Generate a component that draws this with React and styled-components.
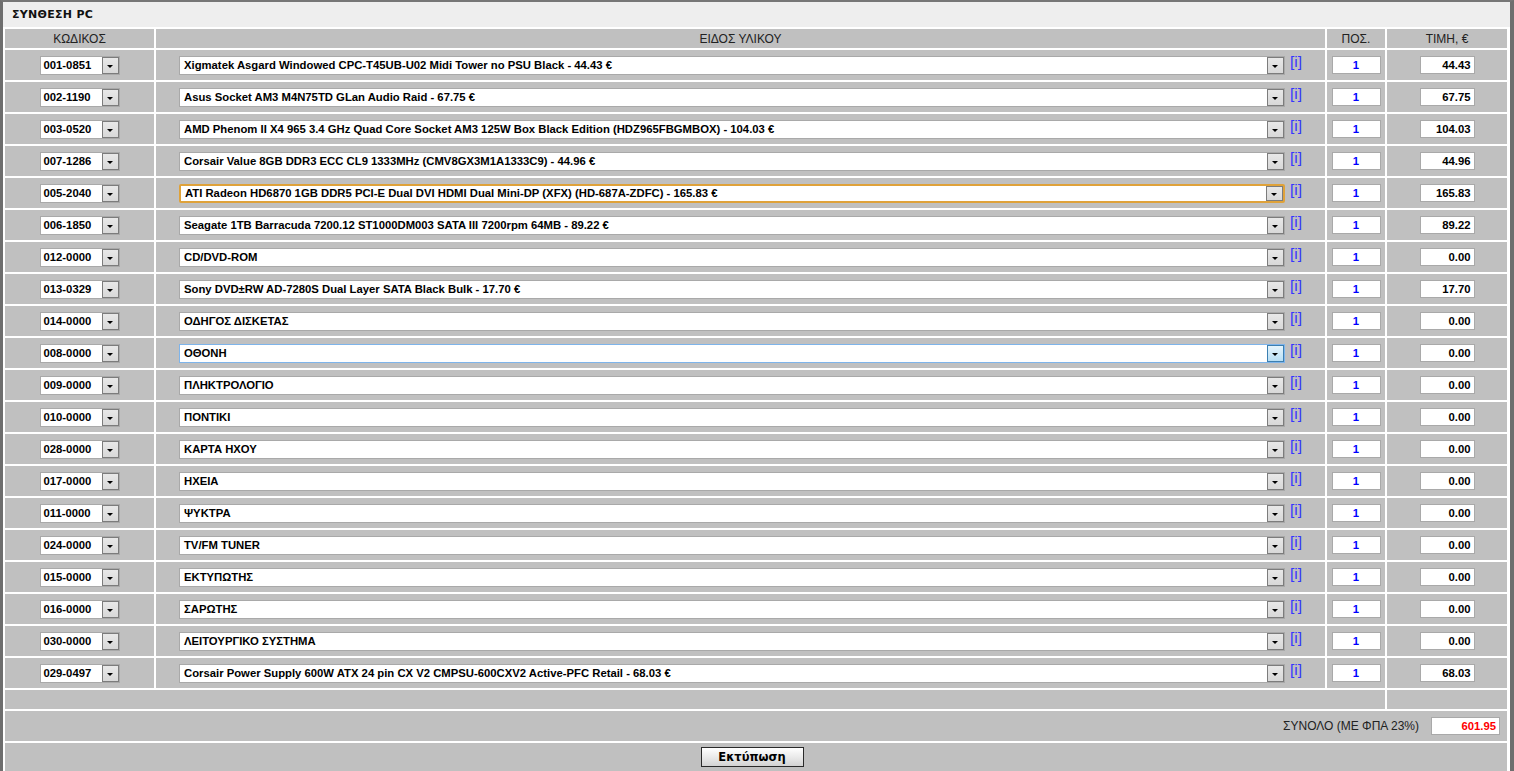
import React from "react";
import styled, { createGlobalStyle, css } from "styled-components";

const Global = createGlobalStyle`
  html, body { margin: 0; padding: 0; background: #ffffff; }
  body { font-family: "Liberation Sans", Arial, sans-serif; }
`;

const Frame = styled.div`
  width: 1514px;
  box-sizing: border-box;
  border-top: 2px solid #767676;
  border-left: 3px solid #6e6e6e;
  border-right: 4px solid #6e6e6e;
  background: #ffffff;
`;

const TitleBar = styled.div`
  height: 25px;
  background: #eeeeee;
  display: flex;
  align-items: center;
  padding-left: 9px;
  font-family: "DejaVu Sans", Verdana, sans-serif;
  font-weight: bold;
  font-size: 11px;
  letter-spacing: 0.3px;
  color: #111;
`;

const Table = styled.div`
  display: grid;
  grid-template-columns: 149px 1169px 58px 120px;
  gap: 2px;
  padding: 2px;
  background: #ffffff;
`;

const Cell = styled.div`
  background: #c0c0c0;
  height: ${(p) => p.$h || 30}px;
  display: flex;
  align-items: center;
  justify-content: ${(p) => p.$justify || "center"};
  grid-column: ${(p) => (p.$span ? `span ${p.$span}` : "auto")};
  box-sizing: border-box;
  padding-right: ${(p) => p.$pr || 0}px;
`;

const HeadText = styled.span`
  font-size: 12px;
  color: #222;
`;

const Select = styled.div`
  display: flex;
  align-items: center;
  box-sizing: border-box;
  width: ${(p) => p.$w}px;
  height: 19px;
  background: #fff;
  border: 1px solid #a9a9a9;
  ${(p) =>
    p.$focus &&
    css`
      border: 2px solid #dfa23a;
      border-radius: 2px;
    `}
  ${(p) =>
    p.$hover &&
    css`
      border-color: #7eb4ea;
    `}
`;

const Value = styled.span`
  flex: 1;
  padding-left: ${(p) => p.$pl || 4}px;
  font-size: 11.3px;
  font-weight: bold;
  color: #000;
  white-space: nowrap;
  overflow: hidden;
`;

const Arrow = styled.span`
  width: 17px;
  height: 17px;
  box-sizing: border-box;
  border: 1px solid #7c7c7c;
  background: linear-gradient(#e8e8e8, #d8d8d8);
  display: flex;
  align-items: center;
  justify-content: center;
  flex-shrink: 0;
  ${(p) =>
    p.$hover &&
    css`
      border-color: #3c7fb1;
      background: linear-gradient(#e5f4fc, #b8dff5);
    `}
  ${(p) =>
    p.$focus &&
    css`
      height: 15px;
    `}
  &::after {
    content: "";
    width: 0;
    height: 0;
    border-left: 3px solid transparent;
    border-right: 3px solid transparent;
    border-top: 3px solid #000;
    margin-top: 2px;
  }
`;

const DescWrap = styled.div`
  display: flex;
  align-items: center;
  gap: 5px;
`;

const Info = styled.a`
  font-size: 15.5px;
  color: #3535ff;
  text-decoration: none;
  margin-bottom: 7px;
  line-height: 15px;
`;

const Input = styled.div`
  box-sizing: border-box;
  width: ${(p) => p.$w}px;
  height: 18px;
  background: #fff;
  border: 1px solid #a9a9a9;
  display: flex;
  align-items: center;
  justify-content: ${(p) => (p.$align === "right" ? "flex-end" : "center")};
  padding-right: ${(p) => (p.$align === "right" ? 3 : 0)}px;
  font-size: 11.3px;
  font-weight: bold;
  color: ${(p) => p.$color || "#000"};
`;

const TotalLabel = styled.span`
  font-size: 12px;
  color: #222;
  margin-right: 12px;
`;

const PrintButton = styled.button`
  width: 103px;
  height: 20px;
  border: 1px solid #2a2a2a;
  background: linear-gradient(#ffffff, #e6e6e6 60%, #d2d2d2);
  font-family: "DejaVu Sans", Verdana, sans-serif;
  font-weight: bold;
  font-size: 11.5px;
  color: #000;
  padding: 0;
  margin-left: -8px;
  margin-bottom: 2px;
`;

const rows = [
  ["001-0851", "Xigmatek Asgard Windowed CPC-T45UB-U02 Midi Tower no PSU Black - 44.43 €", "44.43"],
  ["002-1190", "Asus Socket AM3 M4N75TD GLan Audio Raid - 67.75 €", "67.75"],
  ["003-0520", "AMD Phenom II X4 965 3.4 GHz Quad Core Socket AM3 125W Box Black Edition (HDZ965FBGMBOX) - 104.03 €", "104.03"],
  ["007-1286", "Corsair Value 8GB DDR3 ECC CL9 1333MHz (CMV8GX3M1A1333C9) - 44.96 €", "44.96"],
  ["005-2040", "ATI Radeon HD6870 1GB DDR5 PCI-E Dual DVI HDMI Dual Mini-DP (XFX) (HD-687A-ZDFC) - 165.83 €", "165.83", "focus"],
  ["006-1850", "Seagate 1TB Barracuda 7200.12 ST1000DM003 SATA III 7200rpm 64MB - 89.22 €", "89.22"],
  ["012-0000", "CD/DVD-ROM", "0.00"],
  ["013-0329", "Sony DVD±RW AD-7280S Dual Layer SATA Black Bulk - 17.70 €", "17.70"],
  ["014-0000", "ΟΔΗΓΟΣ ΔΙΣΚΕΤΑΣ", "0.00"],
  ["008-0000", "ΟΘΟΝΗ", "0.00", "hover"],
  ["009-0000", "ΠΛΗΚΤΡΟΛΟΓΙΟ", "0.00"],
  ["010-0000", "ΠΟΝΤΙΚΙ", "0.00"],
  ["028-0000", "ΚΑΡΤΑ ΗΧΟΥ", "0.00"],
  ["017-0000", "ΗΧΕΙΑ", "0.00"],
  ["011-0000", "ΨΥΚΤΡΑ", "0.00"],
  ["024-0000", "TV/FM TUNER", "0.00"],
  ["015-0000", "ΕΚΤΥΠΩΤΗΣ", "0.00"],
  ["016-0000", "ΣΑΡΩΤΗΣ", "0.00"],
  ["030-0000", "ΛΕΙΤΟΥΡΓΙΚΟ ΣΥΣΤΗΜΑ", "0.00"],
  ["029-0497", "Corsair Power Supply 600W ATX 24 pin CX V2 CMPSU-600CXV2 Active-PFC Retail - 68.03 €", "68.03"],
];

export default function App() {
  return (
    <>
      <Global />
      <Frame>
        <TitleBar>ΣΥΝΘΕΣΗ PC</TitleBar>
        <Table>
          <Cell $h={19}><HeadText>ΚΩΔΙΚΟΣ</HeadText></Cell>
          <Cell $h={19}><HeadText>ΕΙΔΟΣ ΥΛΙΚΟΥ</HeadText></Cell>
          <Cell $h={19}><HeadText>ΠΟΣ.</HeadText></Cell>
          <Cell $h={19}><HeadText>ΤΙΜΗ, €</HeadText></Cell>
          {rows.map(([code, desc, price, state]) => (
            <React.Fragment key={code}>
              <Cell>
                <Select $w={80}>
                  <Value $pl={3}>{code}</Value>
                  <Arrow />
                </Select>
              </Cell>
              <Cell>
                <DescWrap>
                  <Select $w={1106} $focus={state === "focus"} $hover={state === "hover"}>
                    <Value>{desc}</Value>
                    <Arrow $hover={state === "hover"} $focus={state === "focus"} />
                  </Select>
                  <Info href="#">[i]</Info>
                </DescWrap>
              </Cell>
              <Cell>
                <Input $w={49} $color="#0000ff">1</Input>
              </Cell>
              <Cell>
                <Input $w={55} $align="right">{price}</Input>
              </Cell>
            </React.Fragment>
          ))}
          <Cell $h={19} $span={3} />
          <Cell $h={19} />
          <Cell $span={4} $justify="flex-end" $pr={7}>
            <TotalLabel>ΣΥΝΟΛΟ (ΜΕ ΦΠΑ 23%)</TotalLabel>
            <Input $w={69} $align="right" $color="#ff0000">601.95</Input>
          </Cell>
          <Cell $span={4} $h={30}>
            <PrintButton>Εκτύπωση</PrintButton>
          </Cell>
        </Table>
      </Frame>
    </>
  );
}
